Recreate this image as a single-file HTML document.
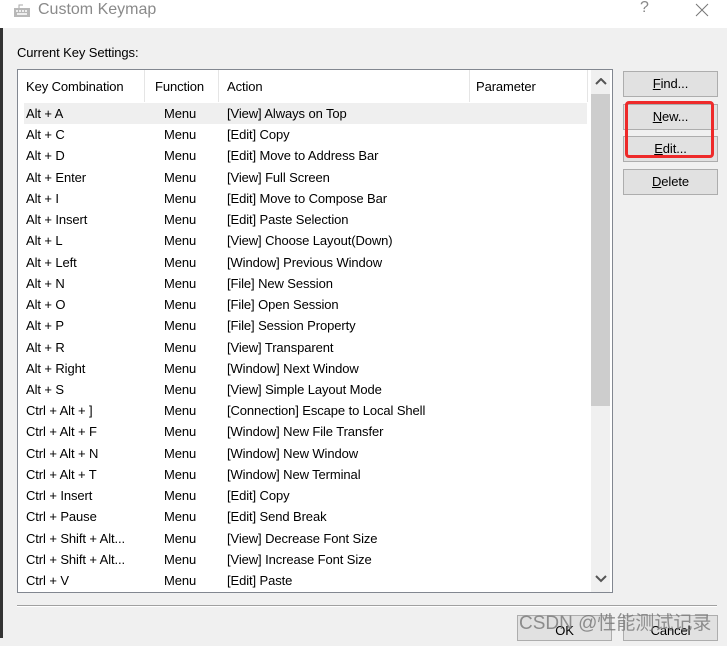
<!DOCTYPE html>
<html><head><meta charset="utf-8"><style>
*{margin:0;padding:0;box-sizing:border-box}
body{width:727px;height:638px;overflow:hidden;background:#f0f0f0;font-family:"Liberation Sans","Noto Sans CJK SC",sans-serif;font-size:13px;letter-spacing:-0.1px;color:#000;position:relative}
.abs{position:absolute}
.title{left:0;top:0;width:727px;height:28px;background:#fff}
.list{left:17px;top:69px;width:596px;height:524px;background:#fff;border:1px solid #828790}
.hdr{left:0;top:0;height:33px;width:573px;background:#fff}
.hdr span{position:absolute;top:9px}
.vd{position:absolute;top:0;height:32px;width:1px;background:#e5e5e5}
.row{position:absolute;left:6px;width:563px;height:21px;line-height:21px;white-space:nowrap}
.row span{position:absolute}
.btn{position:absolute;width:95px;height:26px;background:#e1e1e1;border:1px solid #adadad;text-align:center;line-height:24px}
</style></head><body>
<div class="abs" style="left:0;top:0;width:3px;height:638px;background:#333"></div>
<div class="abs title"></div>
<svg class="abs" style="left:13px;top:4px" width="18" height="14"><rect x="1" y="4" width="16" height="9" fill="#b8b8b8"/><path d="M6 4 V1 H10" stroke="#aaa" fill="none"/><g fill="#eee"><rect x="3" y="6" width="2" height="2"/><rect x="6" y="6" width="2" height="2"/><rect x="9" y="6" width="2" height="2"/><rect x="12" y="6" width="2" height="2"/><rect x="4" y="9" width="10" height="2"/></g></svg>
<div class="abs" style="left:38px;top:1px;font-size:16px;color:#8a8a8a;letter-spacing:0">Custom Keymap</div>
<div class="abs" style="left:640px;top:-1px;font-size:16px;color:#888">?</div>
<svg class="abs" style="left:695px;top:3px" width="14" height="14"><path d="M1 1L13 13M13 1L1 13" stroke="#777" stroke-width="1"/></svg>
<div class="abs" style="left:17px;top:45px">Current Key Settings:</div>
<div class="abs list">
<div class="abs hdr">
<span style="left:8px">Key Combination</span><div class="vd" style="left:126px"></div>
<span style="left:137px">Function</span><div class="vd" style="left:200px"></div>
<span style="left:209px">Action</span><div class="vd" style="left:451px"></div>
<span style="left:458px">Parameter</span><div class="vd" style="left:569px"></div>
</div>
<div class="abs" style="left:573px;top:0;width:19px;height:522px;background:#f0f0f0"></div>
<svg class="abs" style="left:577px;top:8px" width="12" height="8"><path d="M1 6L6 1L11 6" stroke="#555" stroke-width="2" fill="none"/></svg>
<div class="abs" style="left:573px;top:24px;width:19px;height:312px;background:#cdcdcd"></div>
<svg class="abs" style="left:577px;top:505px" width="12" height="8"><path d="M1 1L6 6L11 1" stroke="#555" stroke-width="2" fill="none"/></svg>
<div class="abs" style="left:6px;top:33px;width:563px;height:21px;background:#efefef"></div>
<div id="rows"></div>
</div>
<div class="btn" style="left:623px;top:71px"><u>F</u>ind...</div>
<div class="btn" style="left:623px;top:104px"><u>N</u>ew...</div>
<div class="btn" style="left:623px;top:136px"><u>E</u>dit...</div>
<div class="btn" style="left:623px;top:169px"><u>D</u>elete</div>
<div class="abs" style="left:625px;top:101px;width:89px;height:57px;border:3px solid #ee2a2a;border-radius:4px"></div>
<div class="abs" style="left:17px;top:605px;width:700px;height:1px;background:#a0a0a0"></div>
<div class="abs" style="left:17px;top:606px;width:700px;height:1px;background:#fff"></div>
<div class="btn" style="left:517px;top:615px;line-height:30px">OK</div>
<div class="btn" style="left:623px;top:615px;line-height:30px">Cancel</div>
<div class="abs" style="left:519px;top:608px;font-size:19px;color:#777;opacity:.8;letter-spacing:0">CSDN @性能测试记录</div>
<script>
var d=[["Alt + A","[View] Always on Top"],["Alt + C","[Edit] Copy"],["Alt + D","[Edit] Move to Address Bar"],["Alt + Enter","[View] Full Screen"],["Alt + I","[Edit] Move to Compose Bar"],["Alt + Insert","[Edit] Paste Selection"],["Alt + L","[View] Choose Layout(Down)"],["Alt + Left","[Window] Previous Window"],["Alt + N","[File] New Session"],["Alt + O","[File] Open Session"],["Alt + P","[File] Session Property"],["Alt + R","[View] Transparent"],["Alt + Right","[Window] Next Window"],["Alt + S","[View] Simple Layout Mode"],["Ctrl + Alt + ]","[Connection] Escape to Local Shell"],["Ctrl + Alt + F","[Window] New File Transfer"],["Ctrl + Alt + N","[Window] New Window"],["Ctrl + Alt + T","[Window] New Terminal"],["Ctrl + Insert","[Edit] Copy"],["Ctrl + Pause","[Edit] Send Break"],["Ctrl + Shift + Alt...","[View] Decrease Font Size"],["Ctrl + Shift + Alt...","[View] Increase Font Size"],["Ctrl + V","[Edit] Paste"]];
var h="";d.forEach(function(r,i){h+='<div class="row" style="top:'+(33+i*21.23)+'px"><span style="left:2px">'+r[0]+'</span><span style="left:140px">Menu</span><span style="left:203px">'+r[1]+'</span></div>'});
document.getElementById("rows").innerHTML=h;
</script>
</body></html>
